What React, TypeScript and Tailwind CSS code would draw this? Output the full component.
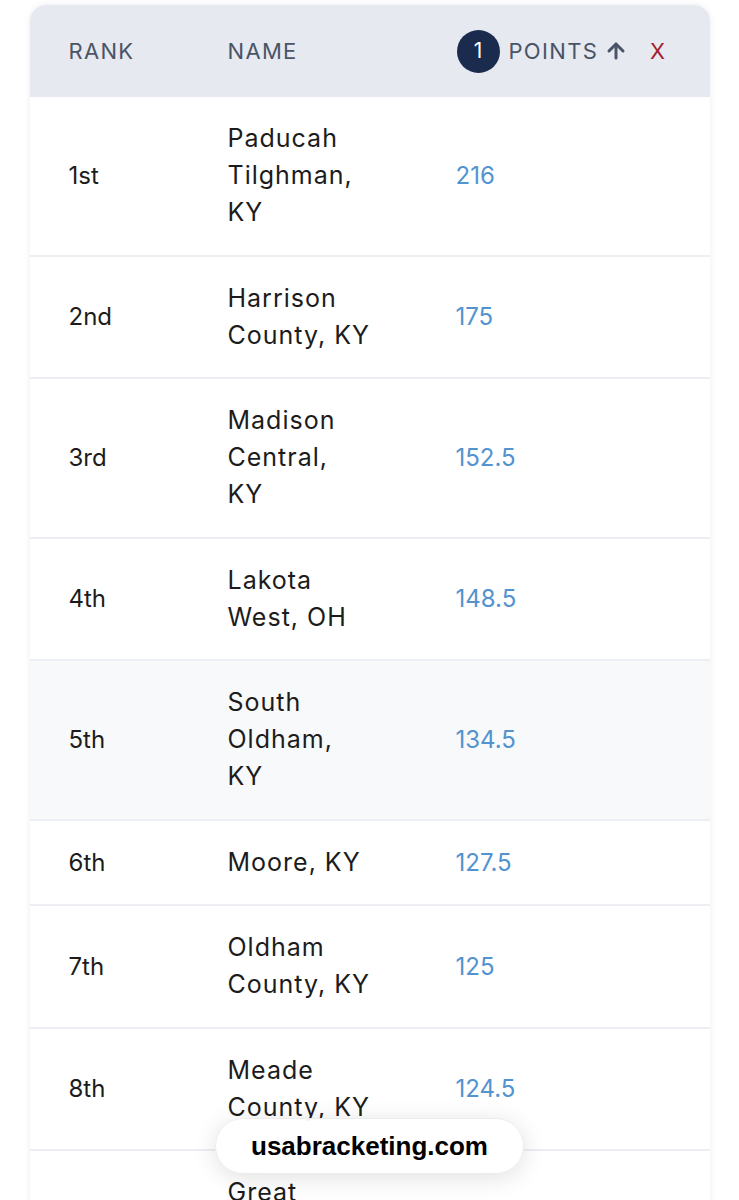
import React from 'react';
import { ArrowUp } from 'lucide-react';

type Row = { rank: string; name: string[]; points: string; shaded?: boolean };

const rows: Row[] = [
  { rank: '1st', name: ['Paducah', 'Tilghman,', 'KY'], points: '216' },
  { rank: '2nd', name: ['Harrison', 'County, KY'], points: '175' },
  { rank: '3rd', name: ['Madison', 'Central,', 'KY'], points: '152.5' },
  { rank: '4th', name: ['Lakota', 'West, OH'], points: '148.5' },
  { rank: '5th', name: ['South', 'Oldham,', 'KY'], points: '134.5', shaded: true },
  { rank: '6th', name: ['Moore, KY'], points: '127.5' },
  { rank: '7th', name: ['Oldham', 'County, KY'], points: '125' },
  { rank: '8th', name: ['Meade', 'County, KY'], points: '124.5' },
  { rank: '9th', name: ['Great', 'Crossing,', 'KY'], points: '118' },
];

export default function App() {
  return (
    <div
      className="relative h-[1200px] overflow-hidden bg-white"
      style={{ fontFamily: 'Inter, "Noto Sans", sans-serif' }}
    >
      {/* table card */}
      <div className="mx-auto mt-[5px] w-[680px] rounded-t-2xl bg-white shadow-[0_0_6px_rgba(0,0,0,0.08)]">
        {/* header */}
        <div className="grid h-[92px] grid-cols-[159px_229px_1fr] items-center rounded-t-2xl bg-[#e6e9f0] pl-[39px] text-[22px] uppercase tracking-[0.06em] text-[#4a5466]">
          <span>Rank</span>
          <span>Name</span>
          <div className="flex items-center">
            <span className="flex h-[43px] w-[43px] items-center justify-center rounded-full bg-[#1b2b4e] text-[21px] tracking-normal text-white">
              1
            </span>
            <span className="ml-[9px]">Points</span>
            <ArrowUp className="ml-[6px] h-[24px] w-[24px]" strokeWidth={3} />
            <span className="ml-[22px] text-[#a3202e]">x</span>
          </div>
        </div>

        {/* rows */}
        {rows.map((r) => (
          <div
            key={r.rank}
            className={`grid grid-cols-[159px_229px_1fr] items-center border-b-2 border-[#eceef3] py-[23.25px] pl-[39px] text-[24px] leading-[37px] text-[#1c1c1c] ${
              r.shaded ? 'bg-[#f8f9fa]' : 'bg-white'
            }`}
          >
            <span>{r.rank}</span>
            <div className="flex flex-col text-[25px] tracking-[0.04em]">
              {r.name.map((line) => (
                <span key={line}>{line}</span>
              ))}
            </div>
            <span className="-ml-px text-[#5293d0]">{r.points}</span>
          </div>
        ))}
      </div>

      {/* browser url pill */}
      <div className="absolute left-[215px] top-[1118px] flex h-[56px] w-[309px] items-center justify-center rounded-full border border-[#ececec] bg-white/95 shadow-[0_4px_24px_rgba(0,0,0,0.12)]">
        <span
          className="text-[26px] font-bold text-black"
          style={{ fontFamily: '"Liberation Sans", Arial, sans-serif' }}
        >
          usabracketing.com
        </span>
      </div>
    </div>
  );
}
